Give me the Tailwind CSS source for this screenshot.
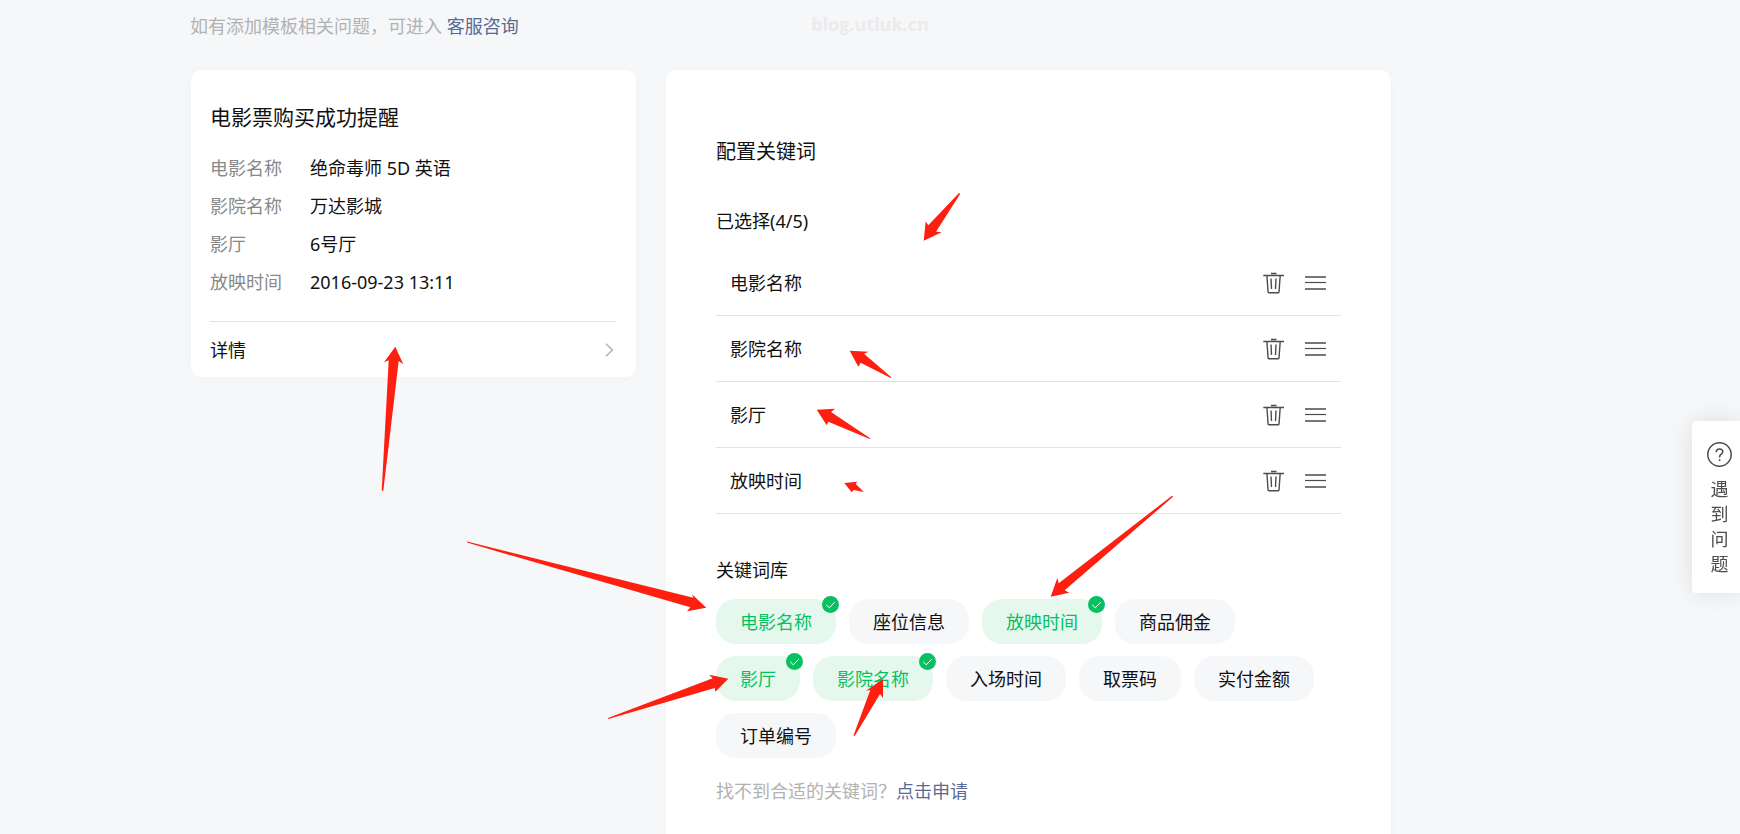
<!DOCTYPE html>
<html lang="zh-CN">
<head>
<meta charset="utf-8">
<meta name="viewport" content="width=device-width, initial-scale=1">
<title>配置关键词</title>
<script src="https://cdn.jsdelivr.net/npm/@tailwindcss/browser@4"></script>
</head>
<body class="relative min-h-screen overflow-hidden bg-[#f5f7f9] font-['Noto_Sans','Noto_Sans_CJK_SC',sans-serif] text-[18px] leading-[28px] text-[#111]">
<svg class="hidden" aria-hidden="true">
  <symbol id="trash" viewBox="0 0 22 22">
    <g fill="none" stroke="#4c4c4c" stroke-width="1.4">
      <path d="M.3 3.500h20.700M8 1.500h5.500M3.900 3.500l1.200 16.500c0 .4.300.7.800.7h9.300c.5 0 .8-.3.800-.7l1.200-16.500M8 6.500l.5 10.500M13 6.500l-.5 10.500"/>
    </g>
  </symbol>
  <symbol id="drag" viewBox="0 0 21 14">
    <path d="M0 1h21M0 13h21" fill="none" stroke="#777" stroke-width="2"/>
    <path d="M0 6.500h21" fill="none" stroke="#4c4c4c" stroke-width="1.200"/>
  </symbol>
  <symbol id="tick" viewBox="0 0 17 17">
    <circle cx="8.500" cy="8.500" r="8.500" fill="#07c160"/>
    <path d="M4.200 8.800l3.100 3 5.400-5.600" fill="none" stroke="#fff" stroke-width="1"/>
  </symbol>
</svg>

<p class="absolute inset-x-0 top-[10px] text-center font-['Open_Sans',sans-serif] text-[18px] font-bold text-[#ebebeb]">blog.utluk.cn</p>

<main class="pt-3 pr-[349px] pl-[190px]">
  <p class="text-[#b2b2b2]">如有添加模板相关问题，可进入 <a href="#" class="text-[#576b95]">客服咨询</a></p>

  <div class="mt-[30px] flex items-start gap-[30px]">
    <section class="ml-px w-[445px] shrink-0 rounded-[10px] bg-white pr-5 pl-[19px] pt-8 shadow-[0_0_12px_rgba(0,0,0,0.02)]">
      <h2 class="text-[21px] leading-[30px]">电影票购买成功提醒</h2>
      <dl class="mt-[17px] grid grid-cols-[100px_1fr] leading-[38px]">
        <dt class="text-[#888]">电影名称</dt><dd>绝命毒师 5D 英语</dd>
        <dt class="text-[#888]">影院名称</dt><dd>万达影城</dd>
        <dt class="text-[#888]">影厅</dt><dd>6号厅</dd>
        <dt class="text-[#888]">放映时间</dt><dd>2016-09-23 13:11</dd>
      </dl>
      <a href="#" class="mt-5 flex h-14 items-center justify-between border-t border-[#e1e2e3] pr-[2px]">
        详情
        <svg class="h-[14px] w-[9px]" viewBox="0 0 9 14" fill="none" stroke="#b2b2b2" stroke-width="1.500" aria-hidden="true"><path d="M1 .7L7.300 7 1 13.300"/></svg>
      </a>
    </section>

    <section class="min-h-[800px] min-w-0 flex-1 rounded-[10px] bg-white px-[50px] pt-[68px] shadow-[0_0_12px_rgba(0,0,0,0.02)]">
      <h2 class="text-[20px]">配置关键词</h2>
      <h3 class="mt-[41px]">已选择(4/5)</h3>
      <ul class="mt-[15px]">
        <li class="flex h-[66px] items-center border-b border-[#e1e2e3] pr-[15px] pl-[14px]">
          <span class="flex-1">电影名称</span>
          <button type="button" aria-label="删除" class="mr-5"><svg class="size-[22px]"><use href="#trash"/></svg></button>
          <button type="button" aria-label="拖动排序"><svg class="h-[14px] w-[21px]"><use href="#drag"/></svg></button>
        </li>
        <li class="flex h-[66px] items-center border-b border-[#e1e2e3] pr-[15px] pl-[14px]">
          <span class="flex-1">影院名称</span>
          <button type="button" aria-label="删除" class="mr-5"><svg class="size-[22px]"><use href="#trash"/></svg></button>
          <button type="button" aria-label="拖动排序"><svg class="h-[14px] w-[21px]"><use href="#drag"/></svg></button>
        </li>
        <li class="flex h-[66px] items-center border-b border-[#e1e2e3] pr-[15px] pl-[14px]">
          <span class="flex-1">影厅</span>
          <button type="button" aria-label="删除" class="mr-5"><svg class="size-[22px]"><use href="#trash"/></svg></button>
          <button type="button" aria-label="拖动排序"><svg class="h-[14px] w-[21px]"><use href="#drag"/></svg></button>
        </li>
        <li class="flex h-[66px] items-center border-b border-[#e1e2e3] pr-[15px] pl-[14px]">
          <span class="flex-1">放映时间</span>
          <button type="button" aria-label="删除" class="mr-5"><svg class="size-[22px]"><use href="#trash"/></svg></button>
          <button type="button" aria-label="拖动排序"><svg class="h-[14px] w-[21px]"><use href="#drag"/></svg></button>
        </li>
      </ul>

      <h3 class="mt-[42px]">关键词库</h3>
      <div class="mt-[15px] flex flex-wrap gap-x-[13px] gap-y-3 pr-3">
        <button type="button" aria-pressed="true" class="relative h-[45px] rounded-[20px] bg-[#e6f8ee] px-6 text-[#07c160]">电影名称<svg class="absolute -top-[3px] -right-[3px] size-[17px]"><use href="#tick"/></svg></button>
        <button type="button" class="h-[45px] rounded-[20px] bg-[#f6f7f9] px-6">座位信息</button>
        <button type="button" aria-pressed="true" class="relative h-[45px] rounded-[20px] bg-[#e6f8ee] px-6 text-[#07c160]">放映时间<svg class="absolute -top-[3px] -right-[3px] size-[17px]"><use href="#tick"/></svg></button>
        <button type="button" class="h-[45px] rounded-[20px] bg-[#f6f7f9] px-6">商品佣金</button>
        <button type="button" aria-pressed="true" class="relative h-[45px] rounded-[20px] bg-[#e6f8ee] px-6 text-[#07c160]">影厅<svg class="absolute -top-[3px] -right-[3px] size-[17px]"><use href="#tick"/></svg></button>
        <button type="button" aria-pressed="true" class="relative h-[45px] rounded-[20px] bg-[#e6f8ee] px-6 text-[#07c160]">影院名称<svg class="absolute -top-[3px] -right-[3px] size-[17px]"><use href="#tick"/></svg></button>
        <button type="button" class="h-[45px] rounded-[20px] bg-[#f6f7f9] px-6">入场时间</button>
        <button type="button" class="h-[45px] rounded-[20px] bg-[#f6f7f9] px-6">取票码</button>
        <button type="button" class="h-[45px] rounded-[20px] bg-[#f6f7f9] px-6">实付金额</button>
        <button type="button" class="h-[45px] rounded-[20px] bg-[#f6f7f9] px-6">订单编号</button>
      </div>
      <p class="mt-[19px] text-[#b2b2b2]">找不到合适的关键词？<a href="#" class="text-[#576b95]">点击申请</a></p>
    </section>
  </div>
</main>

<button type="button" class="fixed top-[421px] right-0 flex flex-col items-center rounded-l bg-white pt-[21px] pr-2 pb-4 pl-[15px] text-[#4c4c4c] shadow-[0_0_24px_rgba(0,0,0,0.1)]">
  <svg class="size-[25px]" viewBox="0 0 25 25" fill="none" stroke="#4c4c4c" stroke-width="1.500" aria-hidden="true"><circle cx="12.500" cy="12.500" r="11.700"/><path d="M9.200 10.200c0-2 1.400-3.300 3.300-3.300s3.300 1.200 3.300 2.900c0 2.300-3.200 2.500-3.200 4.900v.7M12.600 17.200v1.700"/></svg>
  <span class="mt-[10px] w-[18px] leading-[25px]">遇到问题</span>
</button>

<svg class="pointer-events-none absolute top-0 left-0 h-[834px] w-[1740px]" viewBox="0 0 1740 834" fill="#ff1f10" aria-hidden="true">
  <path d="M395.300 346.700L384 362.300l4.700-2L381.700 490.700h1.600L398.700 361l4.600 3.300z"/>
  <path d="M467 541.600L693.300 597.700 692 594.300 706.300 607.700 687 611.300 690.300 607.300 467 542.600z"/>
  <path d="M608 718L712.700 678.300 709 674.700 728.300 678.700 715.300 691.700 714.700 688 608.300 719z"/>
  <path d="M959 193l1.300.7L936 231.700l5.700.6-18 8.400 2-19.400 2.600 4z"/>
  <path d="M849.700 350.700l19 1-4.700 2L891.300 377.300l-.6.700-30-15.300-2.400 4z"/>
  <path d="M816.700 409.700l18.300-1-4 3.300L870.200 438.300l-.5.700-41.400-17.300-1.600 3.600z"/>
  <path d="M844.300 483l12.700-1.300-1.300 2.300 8.300 8-10.300-2-2 2.300z"/>
  <path d="M1172 495.700l1 1L1064.700 590.300l4.600 2.400-18.600 4 6.600-18.700 1.400 5.300z"/>
  <path d="M853.500 735.500L870.300 690l-4.300.7L883 679v19l-3-4L854.700 736z"/>
</svg>
</body>
</html>
